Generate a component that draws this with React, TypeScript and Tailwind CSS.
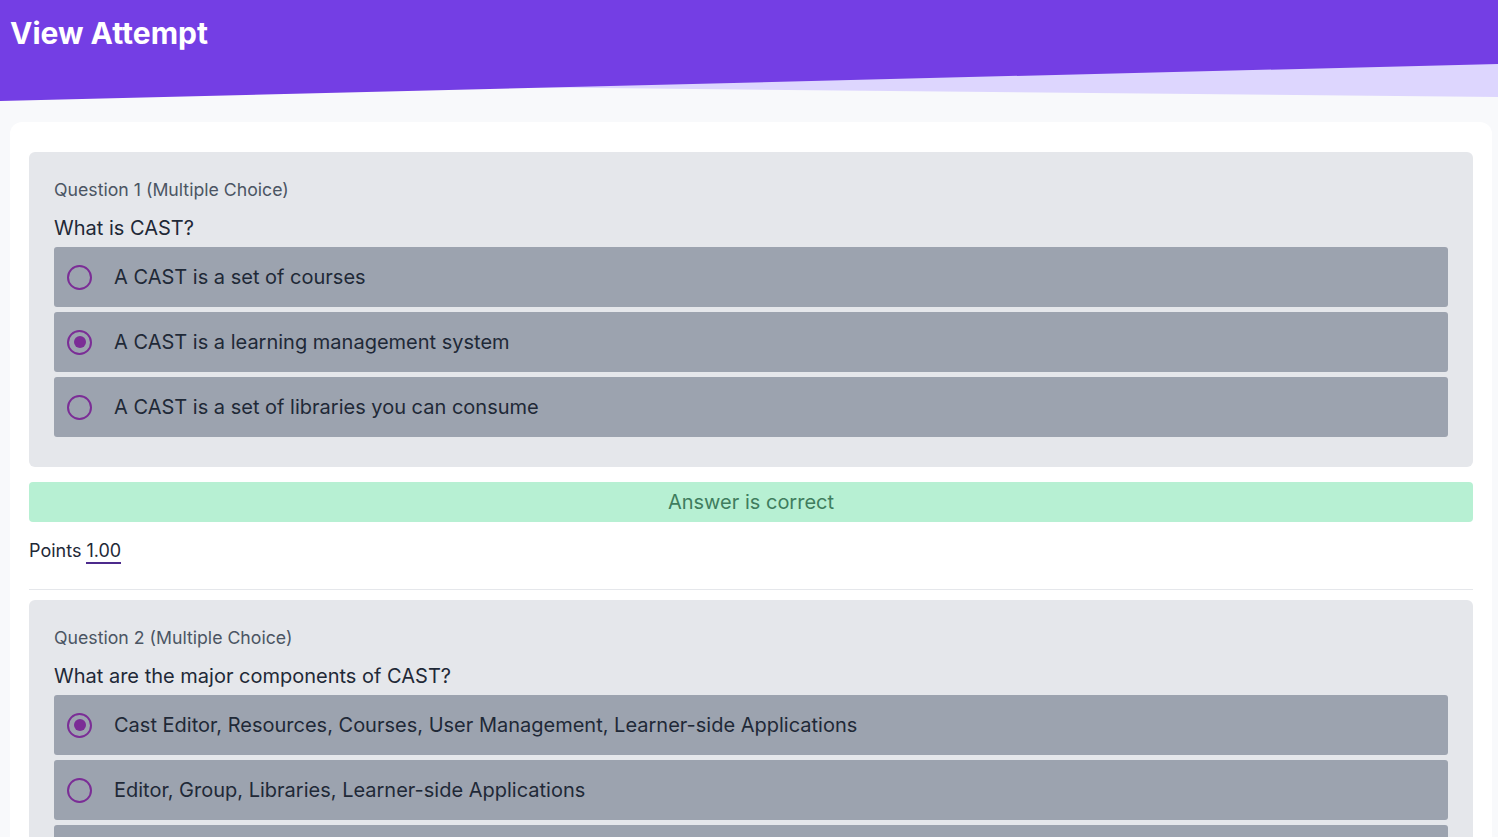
import React from 'react';

interface Question {
  id: number;
  type: string;
  text: string;
  options: string[];
  selected: number;
  correct?: boolean;
  points?: string;
}

const questions: Question[] = [
  {
    id: 1,
    type: 'Multiple Choice',
    text: 'What is CAST?',
    options: [
      'A CAST is a set of courses',
      'A CAST is a learning management system',
      'A CAST is a set of libraries you can consume',
    ],
    selected: 1,
    correct: true,
    points: '1.00',
  },
  {
    id: 2,
    type: 'Multiple Choice',
    text: 'What are the major components of CAST?',
    options: [
      'Cast Editor, Resources, Courses, User Management, Learner-side Applications',
      'Editor, Group, Libraries, Learner-side Applications',
      'Courses, Users, Groups, Reports',
    ],
    selected: 0,
  },
];

function Radio({ checked }: { checked: boolean }) {
  return (
    <span className="flex h-[25px] w-[25px] shrink-0 items-center justify-center rounded-full border-[2.5px] border-[#7b2d96]">
      {checked && <span className="h-[12px] w-[12px] rounded-full bg-[#7b2d96]" />}
    </span>
  );
}

function QuestionBlock({ q }: { q: Question }) {
  return (
    <div>
      <div className="rounded-md bg-[#e5e7eb] px-[25px] pt-[24px] pb-[30px]">
        <p className="mb-[10px] text-[17.7px] leading-[28px] text-[#4b5563]">
          Question {q.id} ({q.type})
        </p>
        <p className="mb-[5px] text-[20px] leading-[28px] text-[#1f2937]">{q.text}</p>
        <div className="flex flex-col gap-[5px]">
          {q.options.map((opt, i) => (
            <div key={i} className="flex h-[60px] items-center gap-[22px] rounded-[3px] bg-[#9ca3af] pl-[13px]">
              <Radio checked={i === q.selected} />
              <span className="text-[20px] text-[#1f2937]">{opt}</span>
            </div>
          ))}
        </div>
      </div>
      {q.correct !== undefined && (
        <>
          <div className="mt-[15px] flex h-[40px] items-center justify-center rounded-[4px] bg-[#b7f0d3] text-[20px] text-[#3f7d5e]">
            Answer is correct
          </div>
          <p className="mt-[15px] text-[18px] leading-[28px] text-[#1f2937]">
            Points <span className="border-b-2 border-[#4c2a8c] pb-[1px]">{q.points}</span>
          </p>
          <div className="mt-[24px] mb-[10px] h-px bg-[#e5e7eb]" />
        </>
      )}
    </div>
  );
}

export default function App() {
  return (
    <div className="min-h-screen bg-[#f8f9fb] font-['Inter',sans-serif]">
      {/* header with slanted edge */}
      <div className="relative h-[101px]">
        <svg className="absolute inset-0 h-full w-full" viewBox="0 0 1498 101" preserveAspectRatio="none">
          <polygon points="0,0 1498,0 1498,97 0,82" fill="#ddd6fe" />
          <polygon points="0,0 1498,0 1498,64 0,101" fill="#743ee4" />
        </svg>
        <h1 className="relative px-[10px] pt-[13px] text-[30px] font-bold leading-[40px] text-white">View Attempt</h1>
      </div>

      <div className="ml-[10px] mr-[6px] mt-[21px] rounded-xl bg-white px-[19px] pt-[30px] pb-[20px]">
        {questions.map((q) => (
          <QuestionBlock key={q.id} q={q} />
        ))}
      </div>
    </div>
  );
}
